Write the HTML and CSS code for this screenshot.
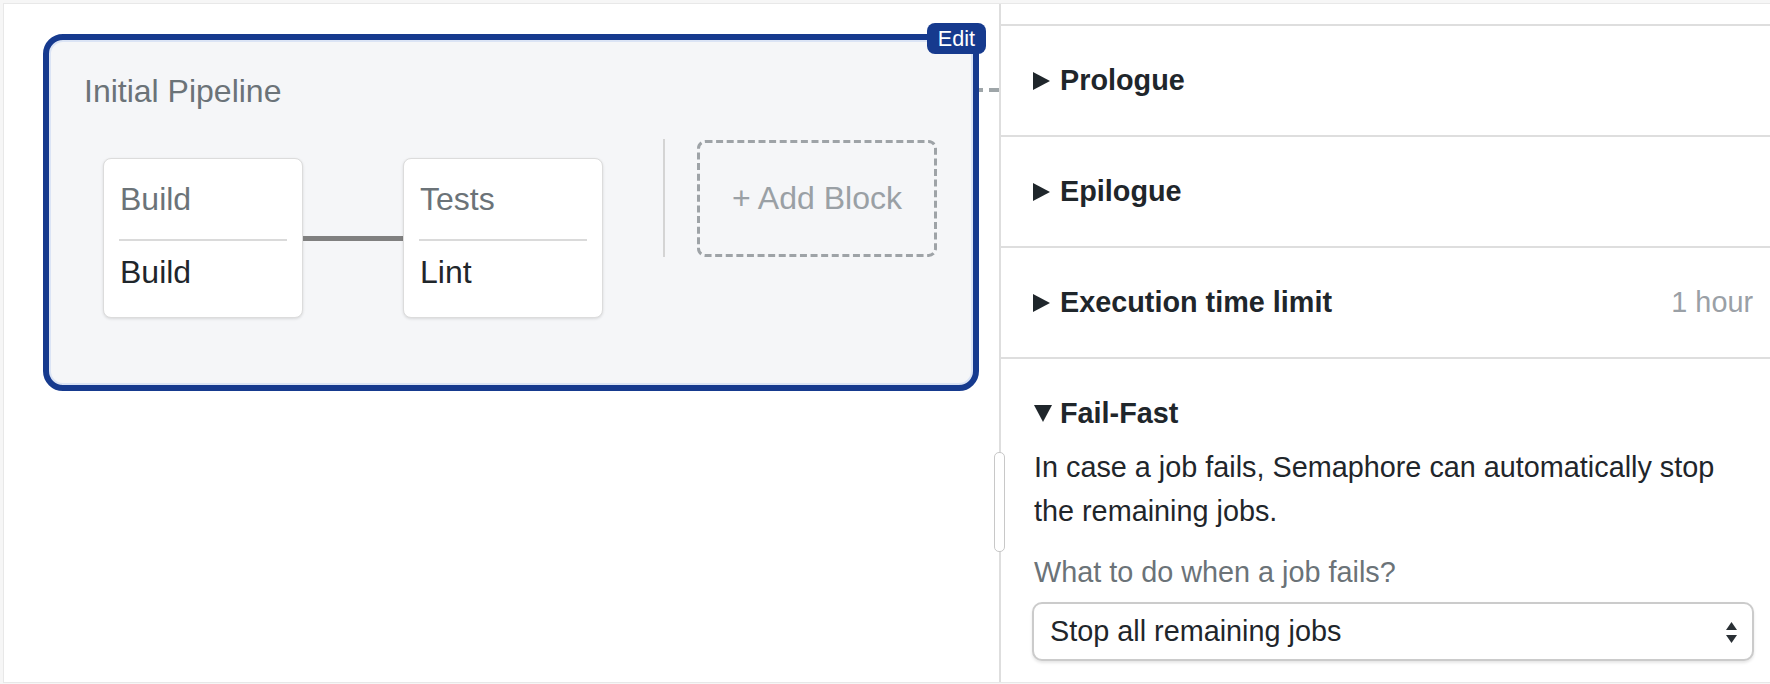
FILE: index.html
```html
<!DOCTYPE html>
<html lang="en">
<head>
<meta charset="utf-8">
<title>Workflow Builder</title>
<link rel="stylesheet" href="styles.css">
</head>
<body>
<div class="frame">
  <main class="canvas">
    <div class="pipeline">
      <span class="edit">Edit</span>
      <span class="link"></span>
      <div class="pipeline-title">Initial Pipeline</div>
      <div class="blocks">
        <div class="block">
          <div class="block-name">Build</div>
          <div class="job">Build</div>
        </div>
        <div class="connector"></div>
        <div class="block">
          <div class="block-name">Tests</div>
          <div class="job">Lint</div>
        </div>
        <div class="vsep"></div>
        <div class="add">
          <svg class="add-border" width="240" height="117" viewBox="0 0 240 117"><rect x="1.5" y="1.5" width="237" height="114" rx="7" ry="7" fill="none" stroke="#9ea3a7" stroke-width="3" stroke-dasharray="7 3.6"/></svg>
          <span>+ Add Block</span>
        </div>
      </div>
    </div>
  </main>
  <aside class="panel">
    <div class="handle"></div>
    <div class="row"><span class="tri-right"></span>Prologue</div>
    <div class="row"><span class="tri-right"></span>Epilogue</div>
    <div class="row"><span class="tri-right"></span>Execution time limit<span class="meta">1 hour</span></div>
    <div class="section">
      <div class="section-head"><span class="tri-down"></span>Fail-Fast</div>
      <p class="desc">In case a job fails, Semaphore can automatically stop the remaining jobs.</p>
      <label class="field-label">What to do when a job fails?</label>
      <div class="select-wrap">
        <div class="select">Stop all remaining jobs</div>
        <svg class="select-arrows" width="11" height="21" viewBox="0 0 11 21"><polygon points="0,8 5.5,0 11,8" fill="#2a3035"/><polygon points="0,13 11,13 5.5,21" fill="#2a3035"/></svg>
      </div>
    </div>
  </aside>
</div>
</body>
</html>
```

FILE: styles.css
```css
html, body {
  margin: 0;
  padding: 0;
}

body {
  background: #f6f6f6;
  font-family: "Liberation Sans", Arial, sans-serif;
  color: #1f262b;
}

.frame {
  margin: 3px 0 0 3px;
  height: 678px;
  background: #ffffff;
  border-top: 1px solid #e8e8e8;
  border-left: 1px solid #e8e8e8;
  border-bottom: 1px solid #e8e8e8;
  display: grid;
  grid-template-columns: 995px 1fr;
  overflow: hidden;
}

/* ---------- canvas ---------- */
.canvas {
  padding: 30px 20px 0 39px;
}

.pipeline {
  position: relative;
  width: 936px;
  height: 357px;
  box-sizing: border-box;
  border: 6px solid #163a8e;
  border-radius: 20px;
  background: #f5f6f8;
  box-shadow: inset 0 0 0 2px #dbe4f5;
  padding: 31px 0 0 35px;
}

.edit {
  position: absolute;
  top: -17px;
  right: -13px;
  height: 31px;
  line-height: 31px;
  padding: 0 11px;
  background: #163a8e;
  color: #ffffff;
  font-size: 21.6px;
  border-radius: 8px;
}

.link {
  position: absolute;
  top: 48px;
  right: -26px;
  width: 20px;
  height: 4px;
  background: repeating-linear-gradient(to left, #9ea5a8 0 10px, transparent 10px 16px);
}

.pipeline-title {
  font-size: 32px;
  line-height: 40px;
  color: #6b7378;
}

.blocks {
  display: flex;
  align-items: flex-start;
  margin: 28px 0 0 19px;
}

.block {
  width: 200px;
  height: 160px;
  box-sizing: border-box;
  margin-top: 19px;
  background: #ffffff;
  border: 1px solid #dcdcdc;
  border-radius: 8px;
  box-shadow: 0 1px 3px rgba(0, 0, 0, 0.12);
  padding: 0 15px;
}

.block-name {
  font-size: 32px;
  line-height: 40px;
  color: #6b7378;
  padding: 20px 1px 20px;
  border-bottom: 2px solid #dadada;
}

.job {
  font-size: 32px;
  line-height: 40px;
  color: #1f262b;
  padding: 11px 1px 0;
}

.connector {
  width: 100px;
  height: 5px;
  margin-top: 97px;
  background: #808080;
}

.vsep {
  width: 2px;
  height: 118px;
  margin-left: 60px;
  background: #d4d4d4;
}

.add {
  position: relative;
  width: 240px;
  height: 117px;
  margin: 1px 0 0 32px;
  display: flex;
  align-items: center;
  justify-content: center;
  font-size: 32px;
  color: #9aa0a5;
}

.add-border {
  position: absolute;
  left: 0;
  top: 0;
}

.add span {
  position: relative;
}

/* ---------- side panel ---------- */
.panel {
  position: relative;
  border-left: 2px solid #dedede;
  padding-top: 20px;
}

.handle {
  position: absolute;
  left: -7px;
  top: 448px;
  width: 11px;
  height: 100px;
  box-sizing: border-box;
  border: 1px solid #c8c8c8;
  border-radius: 5px;
  background: #ffffff;
}

.row {
  height: 111px;
  box-sizing: border-box;
  border-top: 2px solid #dedede;
  display: flex;
  align-items: center;
  padding: 0 17px 0 32px;
  font-size: 28.8px;
  font-weight: bold;
  color: #1f262b;
}

.tri-right {
  width: 0;
  height: 0;
  border-left: 17px solid #1f262b;
  border-top: 9px solid transparent;
  border-bottom: 9px solid transparent;
  margin-right: 10px;
}

.meta {
  margin-left: auto;
  font-weight: normal;
  color: #9aa0a6;
}

.section {
  border-top: 2px solid #dedede;
  padding: 34px 16px 0 33px;
}

.section-head {
  display: flex;
  align-items: center;
  font-size: 28.8px;
  font-weight: bold;
  line-height: 40px;
  color: #1f262b;
}

.tri-down {
  width: 0;
  height: 0;
  border-top: 17px solid #1f262b;
  border-left: 9px solid transparent;
  border-right: 9px solid transparent;
  margin-right: 8px;
}

.desc {
  margin: 12px 0 0;
  font-size: 28.8px;
  line-height: 44px;
  color: #1f262b;
}

.field-label {
  display: block;
  margin-top: 19px;
  font-size: 28.8px;
  line-height: 40px;
  color: #6b7378;
}

.select-wrap {
  position: relative;
  margin: 10px 0 0 -2px;
}

.select {
  height: 59px;
  box-sizing: border-box;
  border: 2px solid #cbcbcb;
  border-radius: 10px;
  box-shadow: 0 2px 3px rgba(0, 0, 0, 0.1);
  padding-left: 16px;
  display: flex;
  align-items: center;
  font-size: 28.8px;
  color: #1f262b;
  background: #ffffff;
}

.select-arrows {
  position: absolute;
  right: 17px;
  top: 20px;
}
```
